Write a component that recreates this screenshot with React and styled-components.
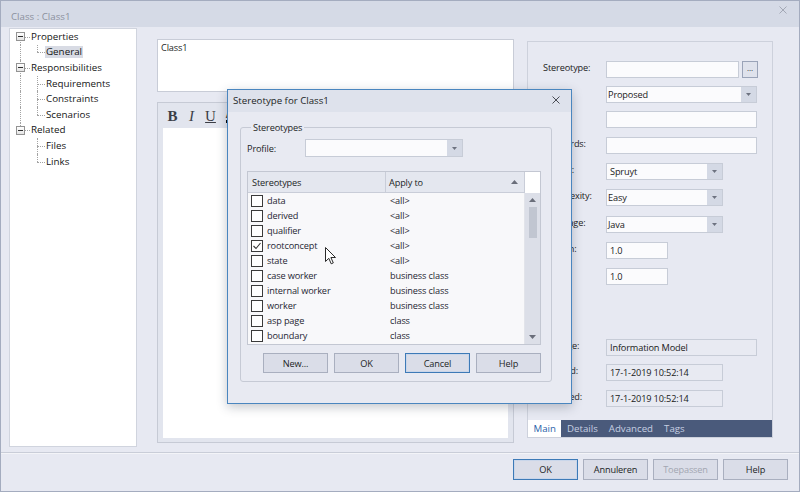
import React from "react";
import styled, { createGlobalStyle } from "styled-components";

const FONT = `"Open Sans", "Noto Sans", "DejaVu Sans", sans-serif`;

const GlobalStyle = createGlobalStyle`
  html, body { margin: 0; padding: 0; background: #e7e9f2; }
  * { box-sizing: border-box; }
`;

const Window = styled.div`
  position: relative;
  width: 800px;
  height: 492px;
  border: 1px solid #a4acbf;
  background: #e7e9f2;
  display: flex;
  flex-direction: column;
  font-family: ${FONT};
  font-size: 9.2px;
  letter-spacing: -0.15px;
  line-height: 13px;
  color: #1c1f26;
  overflow: hidden;
`;

const TitleBar = styled.div`
  flex: none;
  height: 26px;
  background: #d5dae6;
  display: flex;
  justify-content: space-between;
  align-items: flex-start;
  padding: 9px 12px 0 10px;
  color: #8c919e;
  font-size: 9.7px;
  letter-spacing: 0;
`;

const TitleClose = styled.svg`
  margin-top: -4px;
`;

const Content = styled.div`
  flex: none;
  height: 425px;
  display: flex;
  align-items: flex-start;
  padding: 1px 0 0 8px;
`;

/* ---------- Tree ---------- */
const TreePanel = styled.div`
  flex: none;
  width: 128px;
  height: 419px;
  background: #fff;
  border: 1px solid #d0d4de;
`;

const TreeRow = styled.div`
  display: flex;
  align-items: stretch;
  height: 15.6px;
`;

const Guide = styled.span`
  position: relative;
  flex: none;
  width: ${(p) => p.$w}px;
  display: flex;
  align-items: center;
  &::before {
    content: "";
    display: ${(p) => (p.$v ? "block" : "none")};
    position: absolute;
    left: ${(p) => p.$x}px;
    top: ${(p) => (p.$v === "bottom" ? "50%" : "0")};
    bottom: ${(p) => (p.$v === "top" ? "50%" : "0")};
    border-left: 1px dotted #a3a3a3;
  }
  &::after {
    content: "";
    display: ${(p) => (p.$h ? "block" : "none")};
    position: absolute;
    left: ${(p) => p.$x}px;
    right: 0;
    top: 50%;
    border-top: 1px dotted #a3a3a3;
  }
`;

const ExpandBox = styled.span`
  position: relative;
  z-index: 1;
  margin-left: 6px;
  width: 9px;
  height: 9px;
  border: 1px solid #939393;
  background: linear-gradient(#ffffff, #e4e4e4);
  &::after {
    content: "";
    position: absolute;
    left: 1px;
    right: 1px;
    top: 3px;
    height: 1px;
    background: #2e2e2e;
  }
`;

const TreeLabel = styled.span`
  align-self: center;
  padding: 0 1px;
  line-height: 12px;
  font-size: 9.8px;
  letter-spacing: 0;
  color: #141414;
  background: ${(p) => (p.$selected ? "#d8dbe4" : "transparent")};
`;

const tree = [
  { label: "Properties", children: ["General"] },
  { label: "Responsibilities", children: ["Requirements", "Constraints", "Scenarios"] },
  { label: "Related", children: ["Files", "Links"] },
];

function Tree() {
  return (
    <TreePanel>
      {tree.map((node, i) => {
        const first = i === 0;
        const last = i === tree.length - 1;
        const v = first ? "bottom" : last ? "top" : "full";
        return (
          <React.Fragment key={node.label}>
            <TreeRow>
              <Guide $w={20} $x={10} $v={v} $h>
                <ExpandBox />
              </Guide>
              <TreeLabel>{node.label}</TreeLabel>
            </TreeRow>
            {node.children.map((c, j) => (
              <TreeRow key={c}>
                <Guide $w={20} $x={10} $v={last ? null : "full"} />
                <Guide $w={15} $x={7} $v={j === node.children.length - 1 ? "top" : "full"} $h />
                <TreeLabel $selected={c === "General"}>{c}</TreeLabel>
              </TreeRow>
            ))}
          </React.Fragment>
        );
      })}
    </TreePanel>
  );
}

/* ---------- Center ---------- */
const CenterColumn = styled.div`
  flex: none;
  width: 357px;
  margin-left: 20px;
  display: flex;
  flex-direction: column;
`;

const NameBox = styled.div`
  margin-top: 11px;
  height: 53px;
  background: #fff;
  border: 1px solid #c8ccd7;
  padding: 1px 3px;
`;

const NotesPanel = styled.div`
  margin-top: 10px;
  height: 341px;
  border: 1px solid #c6cad5;
  background: #e2e5ee;
  padding: 0 5px 4px 5px;
  display: flex;
  flex-direction: column;
`;

const ToolBar = styled.div`
  flex: none;
  height: 25px;
  display: flex;
  align-items: center;
`;

const ToolBtn = styled.span`
  width: 19px;
  text-align: center;
  font-family: "Liberation Serif", "Times New Roman", serif;
  font-size: 15px;
  letter-spacing: 0;
  line-height: 16px;
  color: #3b3e46;
  font-weight: ${(p) => (p.$b ? 700 : 400)};
  font-style: ${(p) => (p.$i ? "italic" : "normal")};
  text-decoration: ${(p) => (p.$u ? "underline" : "none")};
`;

const ColorA = styled.span`
  width: 19px;
  display: flex;
  flex-direction: column;
  align-items: center;
  font-family: "Liberation Sans", Arial, sans-serif;
  font-size: 11px;
  line-height: 10px;
  font-weight: 700;
  color: #3b3e46;
  &::after {
    content: "";
    width: 8px;
    height: 3px;
    background: #000;
    margin-top: 1px;
  }
`;

const NotesBody = styled.div`
  flex: 1;
  background: #fff;
`;

/* ---------- Right panel ---------- */
const RightPanel = styled.div`
  flex: none;
  margin: 13px 0 0 13px;
  width: 246px;
  height: 397px;
  border: 1px solid #cdd1dc;
  display: flex;
  flex-direction: column;
`;

const Form = styled.div`
  flex: 1;
  padding: 19px 15px 0 15px;
  display: flex;
  flex-direction: column;
`;

const FieldRow = styled.div`
  display: grid;
  grid-template-columns: 63px 1fr;
  align-items: start;
  height: 17px;
  margin-top: ${(p) => p.$mt}px;
`;

const FieldLabel = styled.span`
  color: #222;
  line-height: 13px;
`;

const FieldBox = styled.div`
  display: flex;
  width: ${(p) => p.$w}px;
  height: 17px;
  border: 1px solid #c7ccd7;
  background: ${(p) => (p.$ro ? "#e8eaf2" : "#fbfbfd")};
  color: #1a1a1a;
  line-height: 15px;
`;

const FieldText = styled.span`
  flex: 1;
  padding-left: ${(p) => (p.$pad ? p.$pad : 3)}px;
  white-space: nowrap;
  overflow: hidden;
`;

const DropBtn = styled.span`
  flex: none;
  width: 15px;
  height: 100%;
  background: #d4d9e5;
  display: flex;
  align-items: center;
  justify-content: center;
`;

const Arrow = ({ dir = "down", color = "#6d7280", w = 5, h = 3 }) => (
  <svg width={w} height={h} viewBox={`0 0 ${w} ${h}`}>
    {dir === "down" ? (
      <polygon points={`0,0 ${w},0 ${w / 2},${h}`} fill={color} />
    ) : (
      <polygon points={`0,${h} ${w},${h} ${w / 2},0`} fill={color} />
    )}
  </svg>
);

const StereoWrap = styled.div`
  display: flex;
  gap: 3px;
`;

const DotsBtn = styled.span`
  width: 16px;
  height: 17px;
  border: 1px solid #9aa3b8;
  background: #dfe2ec;
  font-size: 8px;
  line-height: 12px;
  text-align: center;
  color: #333;
`;

const TabStrip = styled.div`
  flex: none;
  height: 17px;
  background: #4a5a7b;
  display: flex;
`;

const Tab = styled.span`
  padding: 0 5.5px;
  line-height: 17px;
  font-size: 9.7px;
  letter-spacing: 0;
  background: ${(p) => (p.$active ? "#ffffff" : "transparent")};
  color: ${(p) => (p.$active ? "#2b5fa9" : "#c6cfe2")};
`;

const fields = [
  { label: "Stereotype:", kind: "stereo", mt: 0 },
  { label: "Status:", kind: "select", value: "Proposed", w: 151, mt: 8, pad: 1 },
  { label: "Alias:", kind: "input", w: 151, mt: 8 },
  { label: "Keywords:", kind: "input", w: 151, mt: 9 },
  { label: "Author:", kind: "select", value: "Spruyt", w: 117, mt: 9 },
  { label: "Complexity:", kind: "select", value: "Easy", w: 117, mt: 9, pad: 1 },
  { label: "Language:", kind: "select", value: "Java", w: 117, mt: 10, pad: 1 },
  { label: "Version:", kind: "input", value: "1.0", w: 62, mt: 9 },
  { label: "Phase:", kind: "input", value: "1.0", w: 62, mt: 9 },
  { label: "Package:", kind: "ro", value: "Information Model", w: 151, mt: 54 },
  { label: "Created:", kind: "ro", value: "17-1-2019 10:52:14", w: 117, mt: 8 },
  { label: "Modified:", kind: "ro", value: "17-1-2019 10:52:14", w: 117, mt: 9 },
];

function Field({ f }) {
  let control;
  if (f.kind === "stereo") {
    control = (
      <StereoWrap>
        <FieldBox $w={133} />
        <DotsBtn>...</DotsBtn>
      </StereoWrap>
    );
  } else if (f.kind === "select") {
    control = (
      <FieldBox $w={f.w}>
        <FieldText $pad={f.pad}>{f.value}</FieldText>
        <DropBtn>
          <Arrow />
        </DropBtn>
      </FieldBox>
    );
  } else {
    control = (
      <FieldBox $w={f.w} $ro={f.kind === "ro"}>
        <FieldText>{f.value || ""}</FieldText>
      </FieldBox>
    );
  }
  return (
    <FieldRow $mt={f.mt}>
      <FieldLabel>{f.label}</FieldLabel>
      {control}
    </FieldRow>
  );
}

/* ---------- Footer ---------- */
const Footer = styled.div`
  flex: 1;
  border-top: 1px solid #c9cdd8;
  box-shadow: inset 0 1px 0 #f3f4f8;
  display: flex;
  justify-content: flex-end;
  align-items: flex-start;
  gap: 5px;
  padding: 6px 11px 0 0;
`;

const Button = styled.span`
  width: 65px;
  height: ${(p) => (p.$h ? p.$h : 21)}px;
  display: flex;
  align-items: center;
  justify-content: center;
  background: #dadde8;
  border: 1px solid ${(p) => (p.$default ? "#3d7ab7" : "#a9afbf")};
  box-shadow: ${(p) => (p.$default ? "inset 0 0 0 1px #c9d6ea" : "none")};
  color: ${(p) => (p.$disabled ? "#a2a6b1" : "#1c1f26")};
`;

/* ---------- Dialog ---------- */
const Dialog = styled.div`
  position: absolute;
  left: 226px;
  top: 88px;
  width: 345px;
  height: 315px;
  border: 1px solid #4a86bf;
  background: #e8eaf2;
  box-shadow: 0 3px 10px rgba(40, 50, 70, 0.28);
  display: flex;
  flex-direction: column;
`;

const DialogTitle = styled.div`
  flex: none;
  height: 22px;
  background: #dee2ec;
  display: flex;
  align-items: center;
  justify-content: space-between;
  padding: 0 11px 2px 5px;
  color: #1b1e25;
  font-size: 9.7px;
  letter-spacing: 0;
`;

const DialogBody = styled.div`
  padding: 9px 19px 0 12px;
`;

const Group = styled.fieldset`
  margin: 0;
  padding: 0 10px 8px 6px;
  border: 1px solid #c6cad5;
  border-radius: 3px;
  min-width: 0;
`;

const GroupLegend = styled.legend`
  padding: 0 2px;
  margin-left: 4px;
  line-height: 13px;
  color: #1c1f26;
`;

const ProfileRow = styled.div`
  margin-top: 5px;
  height: 18px;
  display: flex;
  align-items: center;
`;

const ProfileLabel = styled.span`
  width: 58px;
`;

const ProfileSelect = styled.div`
  width: 158px;
  height: 18px;
  border: 1px solid #c7ccd7;
  background: #fbfbfd;
  display: flex;
  justify-content: flex-end;
`;

const ListBox = styled.div`
  margin-top: 14px;
  height: 174px;
  border: 1px solid #c3c7d2;
  background: #f8f8fa;
  display: grid;
  grid-template-columns: 1fr 15px;
  grid-template-rows: 21px 1fr;
  overflow: hidden;
`;

const ListHeader = styled.div`
  display: grid;
  grid-template-columns: 138px 1fr;
  background: #e4e7ef;
  border-bottom: 1px solid #c9cdd8;
  border-right: 1px solid #c9cdd8;
`;

const HeaderCell = styled.span`
  display: flex;
  align-items: center;
  justify-content: space-between;
  padding: 0 6px 0 ${(p) => p.$pl}px;
  border-right: ${(p) => (p.$sep ? "1px solid #c9cdd8" : "none")};
`;

const HeaderCorner = styled.span`
  background: #ffffff;
`;

const Rows = styled.div`
  overflow: hidden;
  border-right: 1px solid #e2e4ea;
`;

const ListRow = styled.div`
  display: grid;
  grid-template-columns: 138px 1fr;
  height: 15px;
  align-items: center;
  color: #1f2633;
`;

const NameCell = styled.span`
  display: flex;
  align-items: center;
  gap: 4px;
  padding-left: 3px;
`;

const Check = styled.span`
  flex: none;
  width: 12px;
  height: 12px;
  border: 1px solid #3a3a3a;
  background: #fff;
  display: flex;
  align-items: center;
  justify-content: center;
`;

const ApplyCell = styled.span`
  padding-left: 4px;
`;

const ScrollBar = styled.div`
  background: #dcdfe8;
  display: flex;
  flex-direction: column;
  align-items: center;
`;

const ScrollBtn = styled.span`
  flex: none;
  height: 14px;
  display: flex;
  align-items: center;
  justify-content: center;
`;

const ScrollThumb = styled.span`
  flex: none;
  width: 8px;
  height: 31px;
  background: #c1c6d1;
`;

const ScrollTrack = styled.span`
  flex: 1;
`;

const DialogButtons = styled.div`
  margin-top: 8px;
  display: flex;
  justify-content: flex-end;
  gap: 6px;
`;

const Cursor = styled.svg`
  position: absolute;
  left: 324px;
  top: 246px;
`;

const stereotypes = [
  ["data", "<all>"],
  ["derived", "<all>"],
  ["qualifier", "<all>"],
  ["rootconcept", "<all>", true],
  ["state", "<all>"],
  ["case worker", "business class"],
  ["internal worker", "business class"],
  ["worker", "business class"],
  ["asp page", "class"],
  ["boundary", "class"],
  ["", ""],
];

function StereotypeDialog() {
  return (
    <Dialog>
      <DialogTitle>
        <span>Stereotype for Class1</span>
        <svg width="8" height="8" viewBox="0 0 8 8">
          <path d="M0.5 0.5 L7.5 7.5 M7.5 0.5 L0.5 7.5" stroke="#4a4d55" strokeWidth="1" />
        </svg>
      </DialogTitle>
      <DialogBody>
        <Group>
          <GroupLegend>Stereotypes</GroupLegend>
          <ProfileRow>
            <ProfileLabel>Profile:</ProfileLabel>
            <ProfileSelect>
              <DropBtn>
                <Arrow />
              </DropBtn>
            </ProfileSelect>
          </ProfileRow>
          <ListBox>
            <ListHeader>
              <HeaderCell $pl={4} $sep>Stereotypes</HeaderCell>
              <HeaderCell $pl={3}>
                <span>Apply to</span>
                <Arrow dir="up" w={7} h={4} color="#6a6e7a" />
              </HeaderCell>
            </ListHeader>
            <HeaderCorner />
            <Rows>
              {stereotypes.map(([name, apply, checked], idx) => (
                <ListRow key={idx}>
                  <NameCell>
                    <Check>
                      {checked && (
                        <svg width="10" height="10" viewBox="0 0 10 10">
                          <path d="M1.5 5 L4 7.5 L8.5 2" fill="none" stroke="#333" strokeWidth="1.1" />
                        </svg>
                      )}
                    </Check>
                    {name}
                  </NameCell>
                  <ApplyCell>{apply}</ApplyCell>
                </ListRow>
              ))}
            </Rows>
            <ScrollBar>
              <ScrollBtn>
                <Arrow dir="up" w={7} h={4} color="#6a6e7a" />
              </ScrollBtn>
              <ScrollThumb />
              <ScrollTrack />
              <ScrollBtn>
                <Arrow dir="down" w={7} h={4} color="#6a6e7a" />
              </ScrollBtn>
            </ScrollBar>
          </ListBox>
          <DialogButtons>
            <Button $h={20}>New...</Button>
            <Button $h={20}>OK</Button>
            <Button $h={20} $default>Cancel</Button>
            <Button $h={20}>Help</Button>
          </DialogButtons>
        </Group>
      </DialogBody>
    </Dialog>
  );
}

export default function App() {
  return (
    <>
      <GlobalStyle />
      <Window>
        <TitleBar>
          <span>Class : Class1</span>
          <TitleClose width="8" height="8" viewBox="0 0 8 8">
            <path d="M0.5 0.5 L7.5 7.5 M7.5 0.5 L0.5 7.5" stroke="#a3a8b5" strokeWidth="1" />
          </TitleClose>
        </TitleBar>
        <Content>
          <Tree />
          <CenterColumn>
            <NameBox>Class1</NameBox>
            <NotesPanel>
              <ToolBar>
                <ToolBtn $b>B</ToolBtn>
                <ToolBtn $i>I</ToolBtn>
                <ToolBtn $u>U</ToolBtn>
                <ColorA>A</ColorA>
              </ToolBar>
              <NotesBody />
            </NotesPanel>
          </CenterColumn>
          <RightPanel>
            <Form>
              {fields.map((f) => (
                <Field key={f.label} f={f} />
              ))}
            </Form>
            <TabStrip>
              <Tab $active>Main</Tab>
              <Tab>Details</Tab>
              <Tab>Advanced</Tab>
              <Tab>Tags</Tab>
            </TabStrip>
          </RightPanel>
        </Content>
        <Footer>
          <Button $default>OK</Button>
          <Button>Annuleren</Button>
          <Button $disabled>Toepassen</Button>
          <Button>Help</Button>
        </Footer>
        <StereotypeDialog />
        <Cursor width="12" height="18" viewBox="0 0 12 18">
          <path
            d="M0.5 0.5 L0.5 14.5 L3.8 11.3 L6.2 16.8 L8.3 15.9 L5.9 10.5 L10.5 10.5 Z"
            fill="#ffffff"
            stroke="#2a2a2a"
            strokeWidth="1"
            strokeLinejoin="round"
          />
        </Cursor>
      </Window>
    </>
  );
}
